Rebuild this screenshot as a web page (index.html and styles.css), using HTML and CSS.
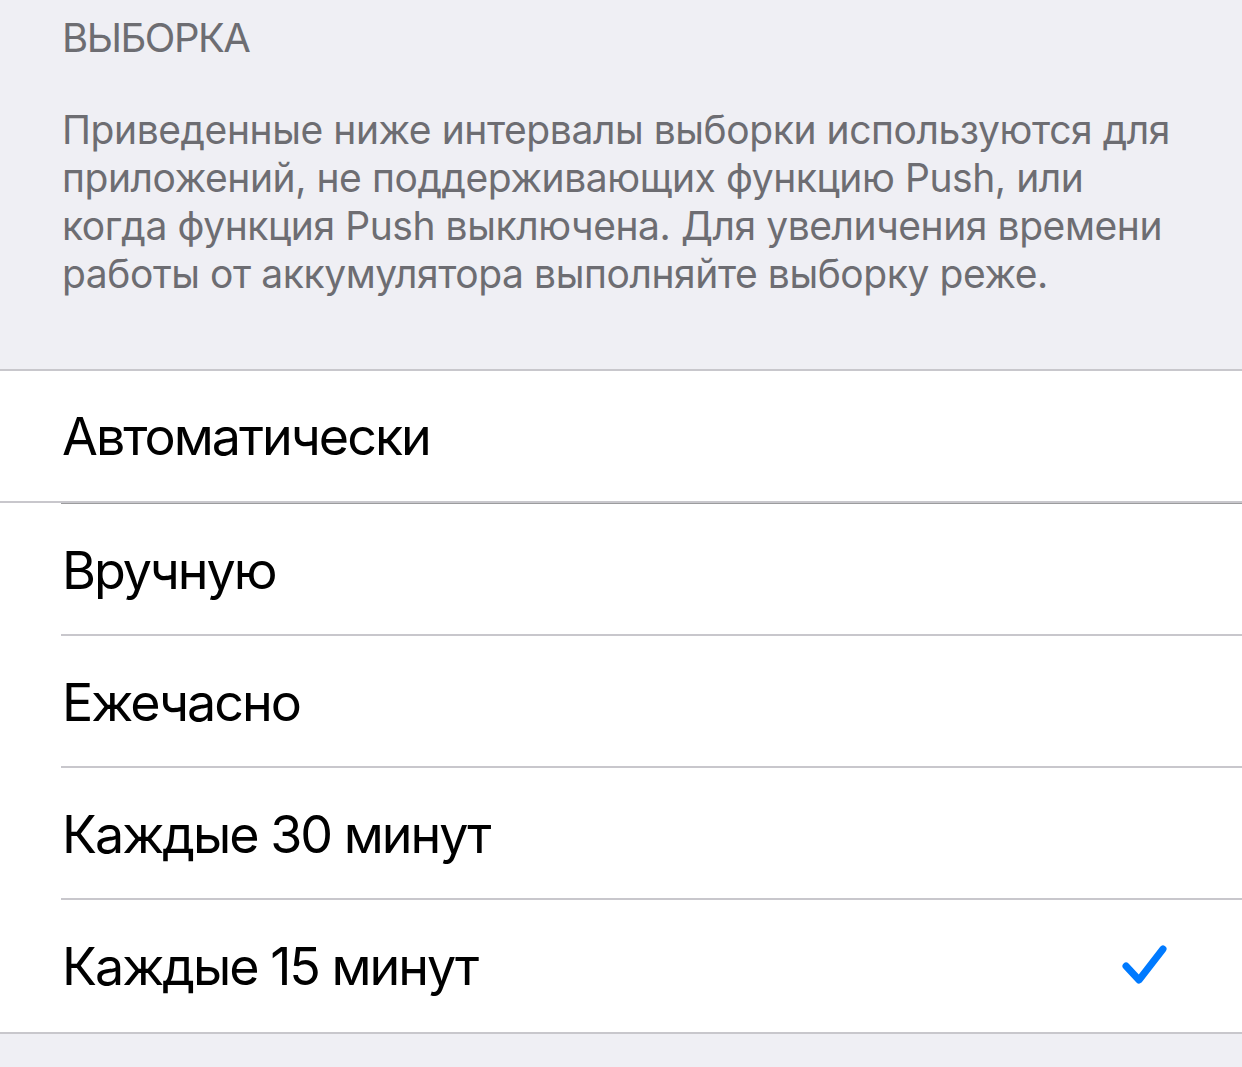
FILE: index.html
```html
<!DOCTYPE html>
<html lang="ru">
<head>
<meta charset="utf-8">
<title>Выборка</title>
<link rel="stylesheet" href="styles.css">
</head>
<body>
<div class="screen">
  <h2 class="section-header">ВЫБОРКА</h2>
  <p class="section-footer">Приведенные ниже интервалы выборки используются для<br>приложений, не поддерживающих функцию Push, или<br>когда функция Push выключена. Для увеличения времени<br>работы от аккумулятора выполняйте выборку реже.</p>

  <ul class="group group-auto">
    <li class="row row-last"><span class="label">Автоматически</span></li>
  </ul>
  <ul class="group group-manual">
    <li class="row"><span class="label">Вручную</span></li>
    <li class="row"><span class="label">Ежечасно</span></li>
    <li class="row"><span class="label">Каждые 30 минут</span></li>
    <li class="row row-last"><span class="label">Каждые 15 минут</span>
      <svg class="check" viewBox="0 0 50 46" width="50" height="46" aria-hidden="true">
        <path d="M6 22 L19 36 L43 5" fill="none" stroke="#007aff" stroke-width="7" stroke-linecap="round" stroke-linejoin="round"/>
      </svg>
    </li>
  </ul>
</div>
</body>
</html>
```

FILE: styles.css
```css
html, body {
  margin: 0;
  padding: 0;
  background: #efeff4;
}

.screen {
  font-family: "Inter", "Roboto", "Noto Sans", sans-serif;
  background: #efeff4;
  min-height: 1067px;
}

.section-header {
  margin: 0;
  padding: 14px 62px 0;
  font-size: 40px;
  line-height: 48px;
  font-weight: 400;
  color: #6d6d72;
  letter-spacing: -1.5px;
}

.section-footer {
  margin: 44px 0 0;
  padding: 0 62px;
  font-size: 39px;
  line-height: 48px;
  color: #6d6d72;
  white-space: nowrap;
  letter-spacing: -0.43px;
}

.group {
  list-style: none;
  margin: 0;
  padding: 0;
  background: #fff;
}

.group-auto {
  margin-top: 71px;
  border-top: 2px solid #c8c7cc;
  border-bottom: 2px solid #c8c7cc;
}

.group-manual {
  border-bottom: 2px solid #c8c7cc;
}

.row {
  height: 132px;
  display: flex;
  align-items: center;
  justify-content: space-between;
  padding: 0 72px 0 62px;
  position: relative;
  box-sizing: border-box;
}

.group-auto .row {
  height: 130px;
}

.row::after {
  content: "";
  position: absolute;
  left: 61px;
  right: 0;
  bottom: 0;
  height: 2px;
  background: #c8c7cc;
}

.row-last::after {
  display: none;
}

.group-manual::before {
  content: "";
  display: block;
  margin-left: 61px;
  height: 1px;
  background: #9c9c9e;
}

.label {
  font-size: 52px;
  color: #000;
  letter-spacing: -2px;
}

.check {
  display: block;
  margin-top: 2px;
}
```
